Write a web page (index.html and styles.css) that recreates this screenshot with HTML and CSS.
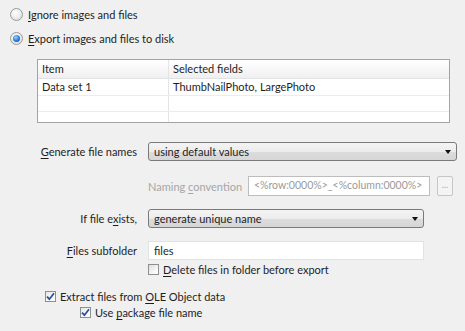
FILE: index.html
```html
<!DOCTYPE html>
<html lang="en">
<head>
  <meta charset="UTF-8">
  <title>Export images and files</title>
  <link rel="stylesheet" href="styles.css">
</head>
<body>
  <div class="dialog">
    <label class="option first">
      <span class="radio"></span>
      <span><u>I</u>gnore images and files</span>
    </label>
    <label class="option">
      <span class="radio checked"></span>
      <span><u>E</u>xport images and files to disk</span>
    </label>

    <div class="grid">
      <div class="grid-row head">
        <div class="cell item">Item</div>
        <div class="cell">Selected fields</div>
      </div>
      <div class="grid-row">
        <div class="cell item">Data set 1</div>
        <div class="cell">ThumbNailPhoto, LargePhoto</div>
      </div>
      <div class="grid-row short">
        <div class="cell item"></div>
        <div class="cell"></div>
      </div>
      <div class="grid-row last">
        <div class="cell item"></div>
        <div class="cell"></div>
      </div>
    </div>

    <div class="form">
      <div class="row gen">
        <span class="lbl"><u>G</u>enerate file names</span>
        <div class="select wide">using default values<span class="arrow"></span></div>
      </div>
      <div class="row naming">
        <span class="lbl"></span>
        <span class="disabled">Naming <u>c</u>onvention</span>
        <div class="input dim">&lt;%row:0000%&gt;_&lt;%column:0000%&gt;</div>
        <div class="dots">...</div>
      </div>
      <div class="row exists">
        <span class="lbl">If file e<u>x</u>ists,</span>
        <div class="select">generate unique name<span class="arrow"></span></div>
      </div>
      <div class="row folder">
        <span class="lbl"><u>F</u>iles subfolder</span>
        <div class="input">files</div>
      </div>
      <div class="row del">
        <span class="lbl"></span>
        <label class="check-row">
          <span class="box"></span>
          <span><u>D</u>elete files in folder before export</span>
        </label>
      </div>
    </div>

    <label class="check-row ole">
      <span class="box on"><svg width="9" height="9" viewBox="0 0 9 9"><path d="M1 4.6 L3.4 7.2 L8 1.2" fill="none" stroke="#2b4f9e" stroke-width="1.8"/></svg></span>
      <span>Extract files from <u>O</u>LE Object data</span>
    </label>
    <label class="check-row pkg">
      <span class="box on"><svg width="9" height="9" viewBox="0 0 9 9"><path d="M1 4.6 L3.4 7.2 L8 1.2" fill="none" stroke="#2b4f9e" stroke-width="1.8"/></svg></span>
      <span>Use <u>p</u>ackage file name</span>
    </label>
  </div>
</body>
</html>
```

FILE: styles.css
```css
body {
  margin: 0;
  background: #f0f0f0;
  font-family: Lato, "Liberation Sans", sans-serif;
  font-size: 11px;
  color: #1e1e1e;
  white-space: nowrap;
}
u {
  text-underline-offset: 2px;
}
.dialog {
  width: 465px;
  height: 331px;
  overflow: hidden;
}
.option {
  display: flex;
  align-items: center;
  gap: 5px;
  height: 14px;
  padding-left: 10px;
  margin-top: 10px;
}
.option.first {
  margin-top: 7px;
}
.radio {
  width: 11px;
  height: 11px;
  border-radius: 50%;
  border: 1px solid #9a9a9a;
  background: radial-gradient(circle at 40% 35%, #fff 0%, #e4e4e4 70%, #cfcfcf 100%);
  position: relative;
}
.radio.checked:after {
  content: "";
  position: absolute;
  left: 2px;
  top: 2px;
  width: 7px;
  height: 7px;
  border-radius: 50%;
  background: radial-gradient(circle at 40% 35%, #9cd4ff 0%, #2b7ad8 55%, #0e3f8c 100%);
}
.grid {
  margin: 14px 0 0 37px;
  width: 411px;
  border: 1px solid #a3a3a3;
  background: #fff;
}
.grid-row {
  display: flex;
  height: 16px;
  border-bottom: 1px solid #ececec;
}
.grid-row.head {
  height: 18px;
  border-bottom: 1px solid #e2e2e2;
  background: linear-gradient(#fff 0%, #fafafa 40%, #eeeff1 100%);
}
.grid-row.short {
  height: 15px;
}
.grid-row.last {
  height: 10px;
  border-bottom: none;
}
.cell {
  flex: 1;
  padding-left: 4px;
  line-height: 16px;
}
.head .cell {
  line-height: 18px;
}
.cell.item {
  flex: none;
  width: 126px;
  border-right: 1px solid #e4e4e4;
}
.form {
  margin-top: 19px;
}
.row {
  display: flex;
  align-items: center;
  gap: 11px;
}
.lbl {
  width: 137px;
  flex: none;
  text-align: right;
}
.select {
  box-sizing: border-box;
  width: 276px;
  height: 19px;
  border: 1px solid #7a7a7a;
  border-radius: 3px;
  background: linear-gradient(#f4f4f4 0%, #ececec 50%, #dcdcdc 52%, #d6d6d6 100%);
  padding-left: 5px;
  line-height: 17px;
  position: relative;
}
.select.wide {
  width: 309px;
}
.arrow {
  position: absolute;
  right: 5px;
  top: 7px;
  border-left: 3.5px solid transparent;
  border-right: 3.5px solid transparent;
  border-top: 4px solid #111;
}
.naming {
  margin-top: 15px;
  height: 20px;
}
.naming .disabled {
  color: #a6a6a6;
  width: 89px;
  flex: none;
}
.input {
  box-sizing: border-box;
  width: 276px;
  height: 19px;
  background: #fff;
  border: 1px solid #e2e2e2;
  padding-left: 5px;
  line-height: 17px;
}
.input.dim {
  width: 182px;
  height: 20px;
  border-color: #bdbdbd;
  color: #9a9a9a;
  font-size: 10.5px;
}
.dots {
  box-sizing: border-box;
  width: 16px;
  height: 20px;
  border: 1px solid #c6c6c6;
  border-radius: 2px;
  background: #f4f4f4;
  color: #aaa;
  font-size: 9px;
  text-align: center;
  line-height: 16px;
  margin-left: -4px;
}
.exists {
  margin-top: 13px;
}
.folder {
  margin-top: 13px;
}
.del {
  margin-top: 2px;
}
.check-row {
  display: flex;
  align-items: center;
  gap: 4px;
  height: 14px;
}
.box {
  box-sizing: border-box;
  width: 11px;
  height: 11px;
  border: 1px solid #8e8f8f;
  background: linear-gradient(135deg, #dcdcdc 0%, #f6f6f6 60%, #fff 100%);
  display: flex;
  align-items: center;
  justify-content: center;
}
.box.on {
  background: linear-gradient(135deg, #e6e6e6 0%, #fafafa 60%, #fff 100%);
}
.ole {
  margin: 13px 0 0 45px;
}
.pkg {
  margin: 2px 0 0 80px;
}
```
